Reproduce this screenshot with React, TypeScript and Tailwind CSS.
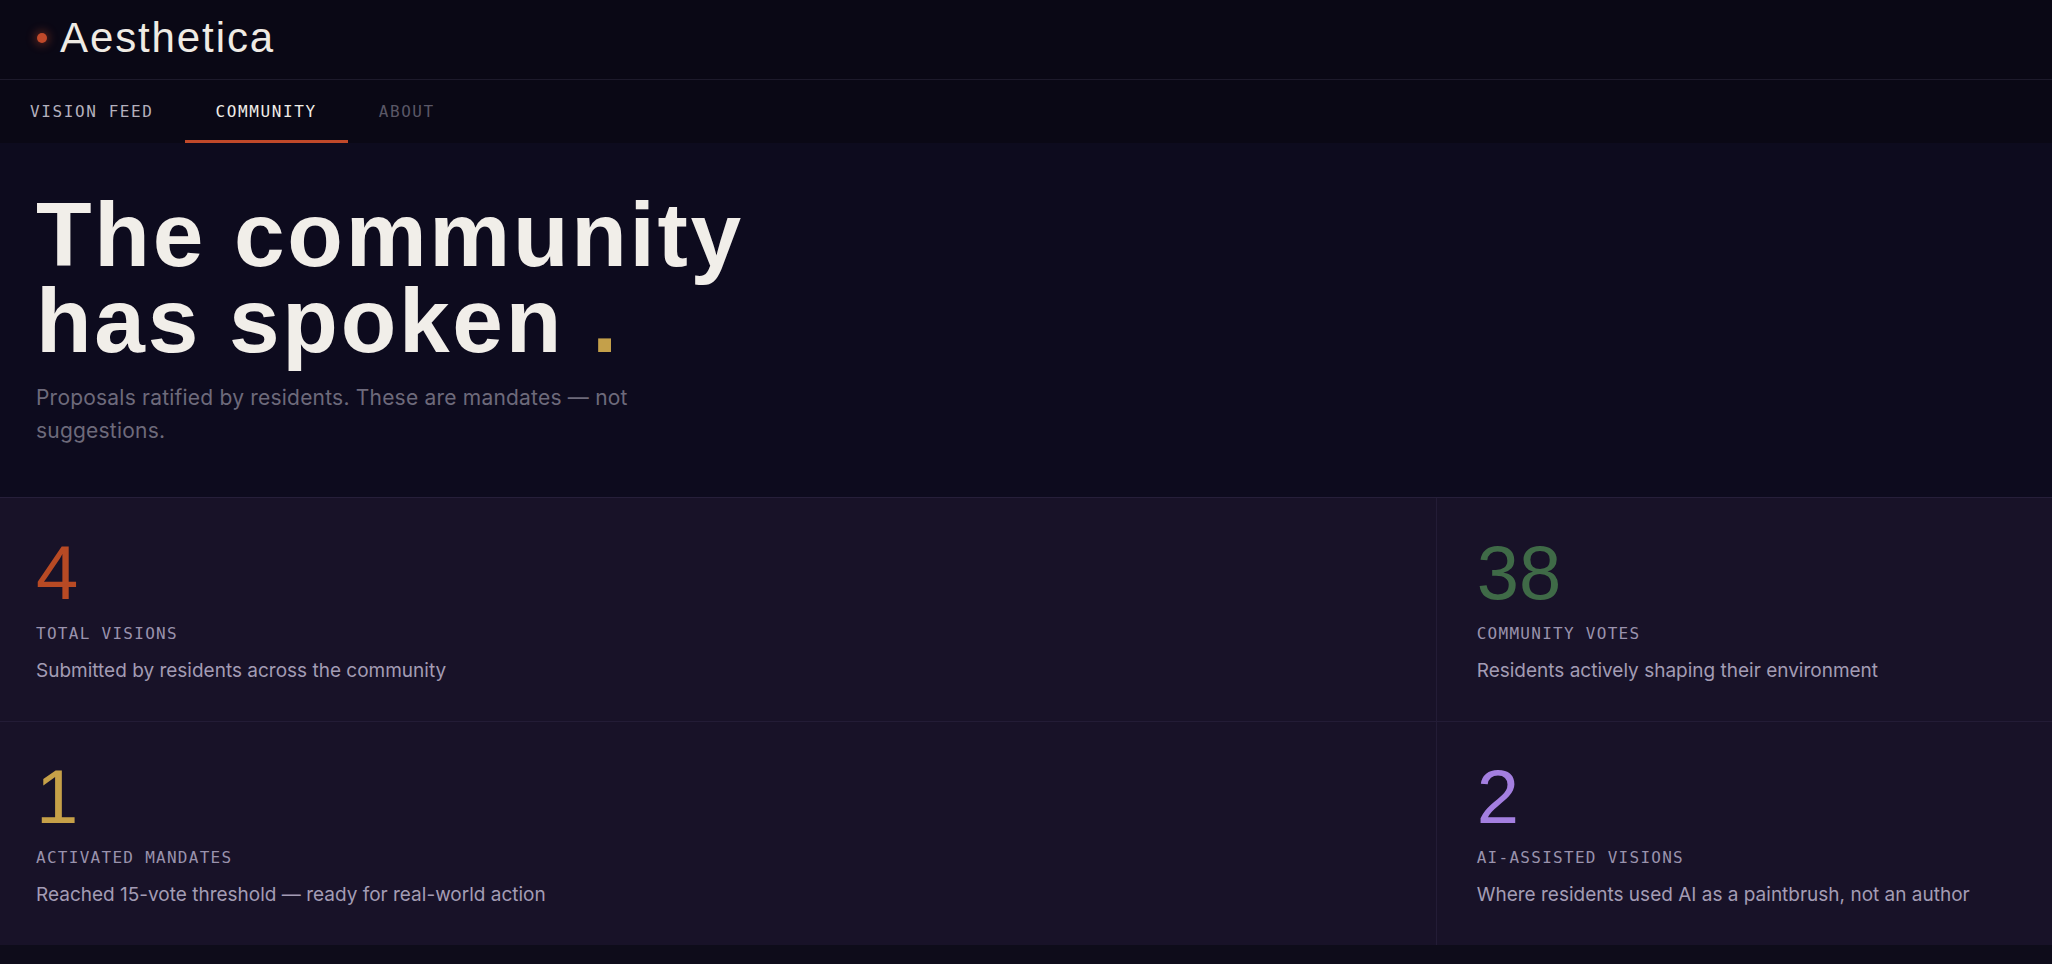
import React from "react";

const display = { fontFamily: '"Liberation Sans", Arial, sans-serif' };
const body = { fontFamily: 'Inter, "Noto Sans", sans-serif' };
const mono = { fontFamily: '"DejaVu Sans Mono", "Liberation Mono", monospace' };

type Stat = {
  value: string;
  label: string;
  note: string;
  color: string;
};

const stats: Stat[] = [
  { value: "4", label: "Total Visions", note: "Submitted by residents across the community", color: "text-[#b84a24]" },
  { value: "38", label: "Community Votes", note: "Residents actively shaping their environment", color: "text-[#3f6a47]" },
  { value: "1", label: "Activated Mandates", note: "Reached 15-vote threshold — ready for real-world action", color: "text-[#c6a048]" },
  { value: "2", label: "AI-Assisted Visions", note: "Where residents used AI as a paintbrush, not an author", color: "text-[#a47fe0]" },
];

function StatCard({ stat, right }: { stat: Stat; right?: boolean }) {
  return (
    <div className={`bg-[#181228] pt-[37px] pb-[36px] ${right ? "pl-[40px]" : "pl-[36px]"} pr-8`}>
      <div className={`text-[76px] leading-none ${stat.color}`} style={display}>
        {stat.value}
      </div>
      <div className="mt-[11px] text-[16px] leading-6 uppercase tracking-[0.08em] text-[#9a92ad]" style={mono}>
        {stat.label}
      </div>
      <p className="mt-[10px] text-[19px] leading-[29px] text-[#a39cb4]" style={body}>
        {stat.note}
      </p>
    </div>
  );
}

export default function App() {
  const tabs = ["Vision Feed", "Community", "About"];
  return (
    <div className="min-h-screen bg-[#0e0c1a] flex flex-col">
      <header className="h-[80px] border-b border-[#1d1a2b] bg-[#0a0815] flex items-center gap-[13px] pl-[37px] pb-[4px]">
        <span className="w-[10px] h-[10px] rounded-full bg-[#c0492a] shadow-[0_0_10px_2px_rgba(192,73,42,0.45)]" />
        <span className="text-[42px] leading-none tracking-[0.045em] text-[#efebe4]" style={display}>
          Aesthetica
        </span>
      </header>

      <nav className="h-[63px] bg-[#0a0815] flex">
        {tabs.map((t, i) => (
          <div key={t} className={`relative flex items-center ${i === 0 ? "pl-[30px] pr-[31px]" : "px-[31px]"}`}>
            <span
              className={`text-[16px] uppercase tracking-[0.1em] ${
                i === 1 ? "text-[#f0ede8]" : i === 0 ? "text-[#b4b0bd]" : "text-[#5a5766]"
              }`}
              style={mono}
            >
              {t}
            </span>
            {i === 1 && <span className="absolute left-0 right-0 bottom-0 h-[3px] bg-[#c0492a]" />}
          </div>
        ))}
      </nav>

      <section className="bg-[#0d0b1e] border-b border-[#261f3a] pt-[49px] pb-[50px] pl-9">
        <h1 className="text-[91px] leading-[0.95] font-bold tracking-[0.03em] text-[#f1eee9]" style={display}>
          The community
          <br />
          has spoken <span className="text-[#c4a04a]">.</span>
        </h1>
        <p className="mt-[16px] max-w-[650px] text-[21px] leading-[33px] tracking-[0.01em] text-[#6d6a7b]" style={body}>
          Proposals ratified by residents. These are mandates — not suggestions.
        </p>
      </section>

      <div className="grid grid-cols-[7fr_3fr] gap-px bg-[#231c36]">
        <StatCard stat={stats[0]} />
        <StatCard stat={stats[1]} right />
        <StatCard stat={stats[2]} />
        <StatCard stat={stats[3]} right />
      </div>
    </div>
  );
}
